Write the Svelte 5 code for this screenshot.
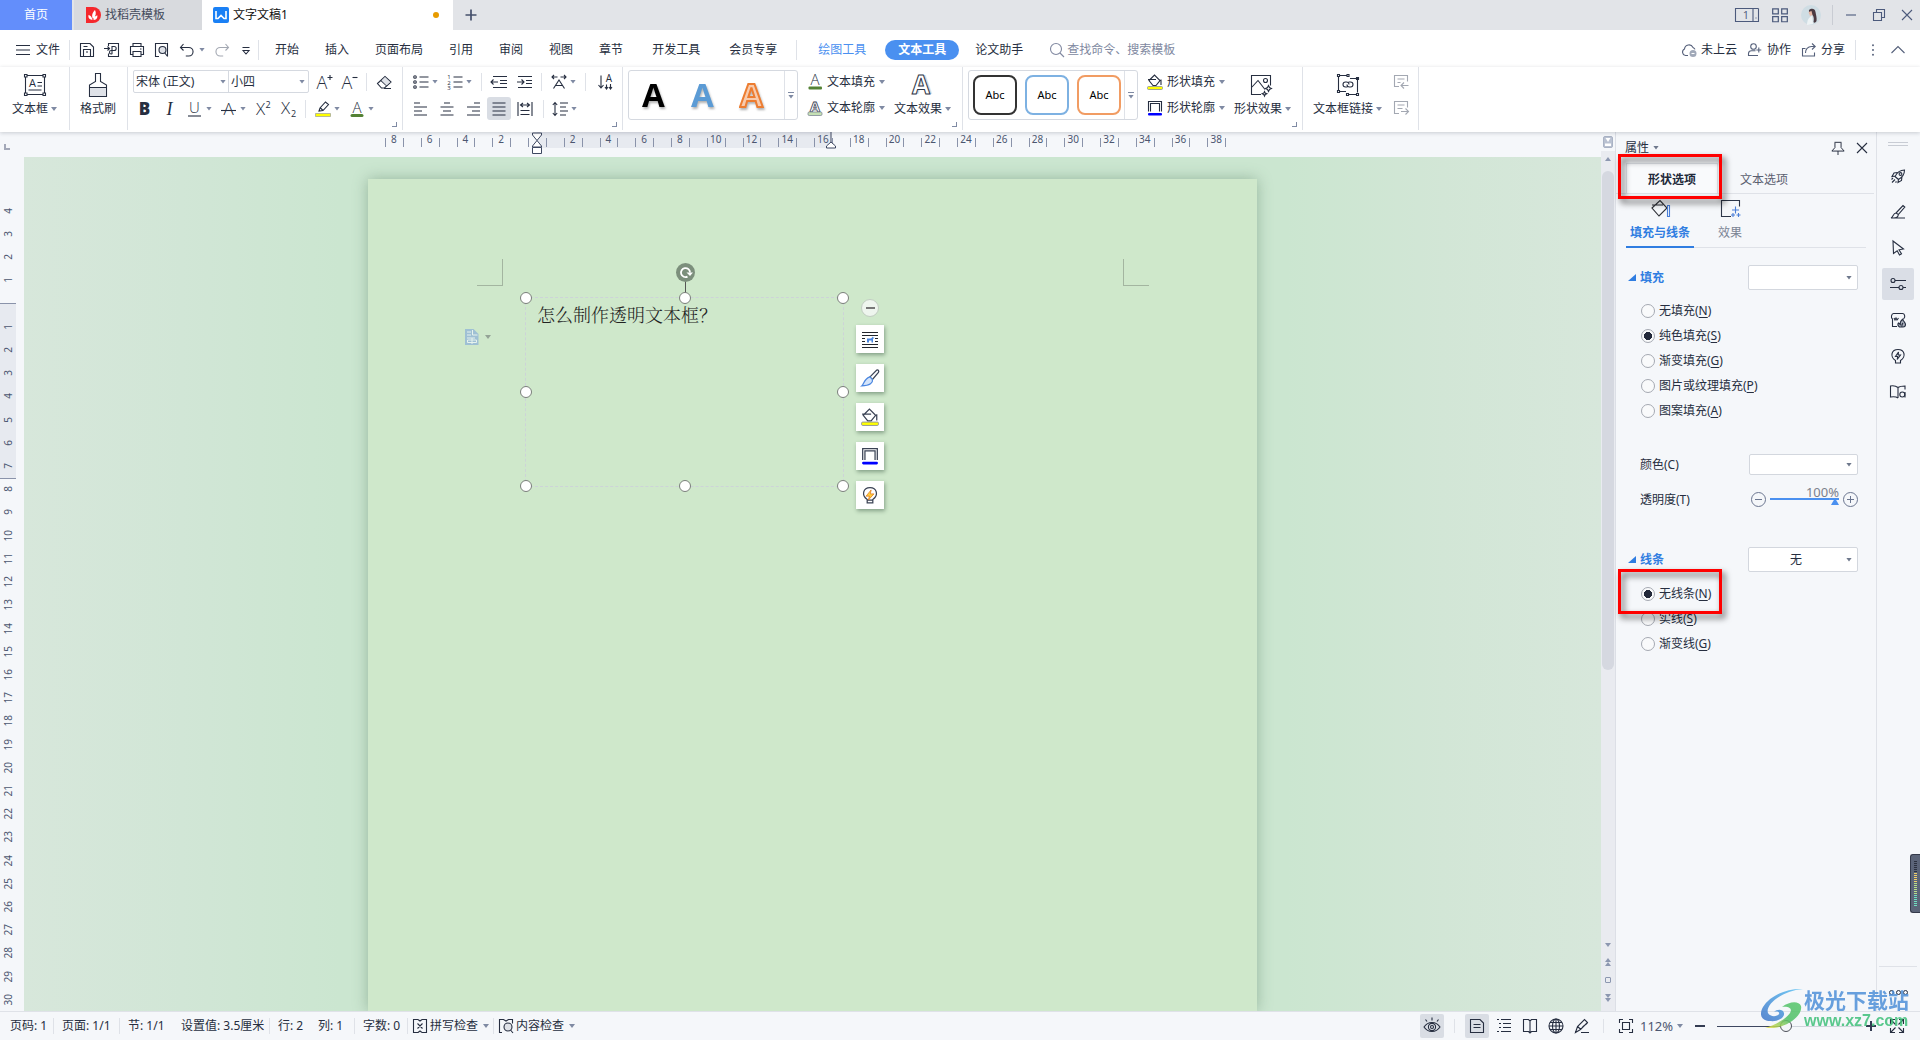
<script>
  const hTicks = Array.from({ length: 48 }, (_, i) => {
    const n = i - 8;
    return n !== 0 && i % 2 === 0 ? Math.abs(n) : '';
  });
  const vTicks = Array.from({ length: 35 }, (_, i) => (i === 4 ? '' : Math.abs(i - 4)));
  const fillKinds = [
    ['无填充', 'N'], ['纯色填充', 'S'], ['渐变填充', 'G'], ['图片或纹理填充', 'P'], ['图案填充', 'A']
  ];
  const lineKinds = [['无线条', 'N'], ['实线', 'S'], ['渐变线', 'G']];
  let fill = $state('S');
  let line = $state('N');
  let zoom = $state(47);
  let opacity = $state(100);
  const handles = ['nw', 'n', 'ne', 'w', 'e', 'sw', 's', 'se'];
  const f = 'stroke="none" fill="currentColor"';
  const letter = (x, y, s, t, extra = '') =>
    `<text x="${x}" y="${y}" font-size="${s}" text-anchor="middle" ${f} font-family="Open Sans, Lato, sans-serif" ${extra}>${t}</text>`;
  const light = 'font-weight="300"';

  const icons = {
    menu: '<path d="M1 3.5h14M1 8h14M1 12.5h14"/>',
    save: '<path d="M1.5 1.5h9.500l3.500 3.500v9.500h-13zM4.500 14.500v-7h7v7M4.500 4.500h4M7 10h2"/>',
    pdf: '<path d="M4.500 4v-2.500h10v13h-10v-3M0 6.500h5M3.500 4.500l2 2-2 2M8 12v-7.500h2.200a2 2 0 0 1 0 4h-3a1.700 1.700 0 0 0 0 3.500h1"/>',
    print: '<path d="M4 4.500v-3h8v3M4 12.500h-2.500v-8h13v8h-2.500M4 9.500h8v5h-8zM11 7h1.500"/>',
    preview: '<path d="M5 14.500h-3.500v-13h12v13M10.800 11l2.800 3.500"/><circle cx="8.500" cy="8" r="3.500" fill="#dfe2e8"/>',
    undo: '<path d="M4.500 2l-3 3.500 3 3M1.800 5.500h8a4.200 4.200 0 0 1 0 8.500h-3"/>',
    redo: '<path d="M11.500 2l3 3.500-3 3M14.200 5.500h-8a4.200 4.200 0 0 0 0 8.500h3"/>',
    more: '<path d="M3.500 5.500h7M4 8.500l3 3.500 3-3.500z"/>',
    search: '<circle cx="7" cy="7" r="5.500"/><path d="M11 11l4 4"/>',
    cloud: '<path d="M7 13.500h-2.500a3.500 3.500 0 0 1-1-6.600a4.500 4.500 0 0 1 8.500-1.500a3.500 3.500 0 0 1 2 2"/><circle cx="12" cy="11.500" r="3.500" fill="#a0a8b8" stroke="none"/><path d="M10.500 11.500h3" stroke="#fff"/>',
    people: '<circle cx="6.500" cy="4.500" r="2.800"/><path d="M11 13.500h-9.500v-2a3 3 0 0 1 3-2.800h4M11.800 5.500v5M9.300 8h5"/>',
    share: '<path d="M4.500 6.500h-3v7.500h12v-3.500M4.500 11a6 6 0 0 1 6-6.500h3.500M11 1.500l3.200 3-3.200 3"/>',
    dots: `<g ${f}><circle cx="8" cy="2.500" r="1.100"/><circle cx="8" cy="8" r="1.100"/><circle cx="8" cy="13.500" r="1.100"/></g>`,
    up: '<path d="M1.500 11l6.500-6.500 6.500 6.500"/>',
    grid: '<path d="M1.500 2.500h5v4.500h-5zM9.500 2.500h5v4.500h-5zM1.500 9.500h5v4.500h-5zM9.500 9.500h5v4.500h-5z"/>',
    count: `<path d="M18 13.500h-17.500v-13h23M18 .5v13M23.500 .5v13h-5.500"/><path d="M20.500 10h1"/>${letter(11, 11, 11, '1')}`,
    min: '<path d="M3 8h10"/>',
    restore: '<path d="M2.500 5.500h8v8h-8zM5.500 5v-2.500h8v8h-2.500"/>',
    close: '<path d="M3 3l10 10M13 3l-10 10"/>',
    plus: '<path d="M8 2.500v11M2.500 8h11" stroke-width="1.700"/>',
    textbox: `<path d="M4 2.500h16M4 21.500h16M2.500 4v16M21.500 4v16M14.500 9.500h4.500M14.500 13h4.500M5.500 17h13"/><path d="M1.500 1.500h2.500v2.500h-2.500zM20 1.500h2.500v2.500h-2.500zM1.500 20h2.500v2.500h-2.500zM20 20h2.500v2.500h-2.500z"/>${letter(9.5, 14, 11, 'A')}`,
    brush: '<path d="M9.500 8.500v-8h5v8l6 3.500v11.500h-17v-11.500zM3.500 14.500h17"/><path d="M4 15h16v8h-16z" fill="#dfe2e8" stroke="none"/>',
    aplus: `${letter(6, 15, 18, 'A', light)}<path d="M11.500 3.500h5M14 1v5"/>`,
    aminus: `${letter(6, 15, 18, 'A', light)}<path d="M11.500 3.500h5"/>`,
    eraser: '<path d="M1.500 9.500l7.500-7 6 5.500-6.500 6h-3zM5 6.500l6 5.500M8 14.500h7"/><path d="M5.500 6.500l3.500-3.500 5 5-3.500 3.500z" fill="#dfe2e8" stroke="none"/>',
    bold: letter(7.500, 14, 17, 'B', 'font-weight="800"'),
    italic: letter(7.500, 14, 18, 'I', 'font-style="italic" style="font-family:Liberation Serif"'),
    under: `${letter(7.500, 12, 15, 'U', light)}<path d="M1 15h13"/>`,
    strike: `${letter(7.500, 14, 17, 'A', light)}<path d="M0 9.500h15"/>`,
    sup: `${letter(5.500, 14, 17, 'X', light)}${letter(13, 7, 9, '2')}`,
    sub: `${letter(5.500, 13, 17, 'X', light)}${letter(13.500, 15.500, 9, '2')}`,
    hilite: '<path d="M4 10l1-3 5.500-6 3 2.500-5.500 6-4 .5zM5.500 7l2.500 2.500"/><path d="M.5 12.500h15v3h-15z" fill="#ff0" stroke="#8a8f9c" stroke-width=".6"/>',
    acolor: `${letter(8, 11.500, 15, 'A', light)}<rect x="1.500" y="13" width="13" height="3" rx="1.500" fill="#548235" stroke="none"/>`,
    afill: `${letter(8, 11, 15, 'A', light)}<rect x="1.500" y="12.500" width="13.500" height="3" rx="1" fill="#548235" stroke="none"/>`,
    aline: '<text x="8" y="12" font-size="15" font-weight="bold" text-anchor="middle" fill="#fff" stroke="#3a4254" stroke-width=".8" font-family="Open Sans">A</text><rect x="1" y="12" width="14" height="3.500" rx="1.200" fill="#c5e0b4" stroke="#7f8896" stroke-width=".8"/>',
    bullets: '<circle cx="2" cy="3" r="1.300"/><circle cx="2" cy="8" r="1.300"/><circle cx="2" cy="13" r="1.300"/><path d="M6.500 3h9M6.500 8h9M6.500 13h9"/>',
    numbers: `<path d="M6.500 3h9M6.500 8h9M6.500 13h9"/>${letter(2, 5, 6, '1')}${letter(2, 10.500, 6, '2')}${letter(2, 16, 6, '3')}`,
    outdent: '<path d="M2 2.500h14M9 6.500h7M9 9.500h7M2 13.500h14M0 8h7M2.500 5.500l-2.500 2.500 2.500 2.500"/>',
    indent: '<path d="M2 2.500h14M10 6.500h6M10 9.500h6M2 13.500h14M1 8h7M5.500 5.500l2.500 2.500-2.500 2.500"/>',
    textdir: '<path d="M1 3h5.500M9.500 3h5.500M3 1l-2 2 2 2M13 1l2 2-2 2M2.500 14.500l5.500-8.500 5.500 8.500M5 11.500h6"/>',
    sort: `<path d="M6 1.500v12M3.500 11l2.500 3 2.500-3M11.500 14.500v-4M15.500 10v4.500M14 13l1.500 2 1.500-2M10 13l1.500 2 1.500-2"/>${letter(14, 8, 10, 'A')}`,
    left: '<path d="M1 2h6M1 6h13M1 10h8M1 14h13"/>',
    center: '<path d="M5 2h6M1.500 6h13M4 10h8M1.500 14h13"/>',
    right: '<path d="M9 2h6M2 6h13M7 10h8M2 14h13"/>',
    justify: '<path d="M1.500 2h13M1.500 6h13M1.500 10h13M1.500 14h13"/>',
    distribute: '<path d="M1 1v14M15 1v14M3.500 4h9M6 2l-2.500 2 2.500 2M10 2l2.500 2-2.500 2M3.500 9.500h9M3.500 13.500h9"/>',
    spacing: '<path d="M3 1.500v13M.8 4l2.200-2.500 2.200 2.500M.8 12l2.200 2.500 2.200-2.500M8 2h8M8 6h6M8 10h8M8 14h6"/>',
    effectA: '<text x="14" y="21" font-size="26" font-weight="bold" text-anchor="middle" fill="#d9dbe0" stroke="none" font-family="Open Sans">A</text><text x="12" y="21" font-size="26" font-weight="bold" text-anchor="middle" fill="#fff" stroke="#2d3648" stroke-width="1" font-family="Open Sans">A</text>',
    bucket: '<path d="M2 6.500l5.500-5.500 5.500 5.500-4 5h-3zM1 5.500h8M14 5.500v5.500"/><rect x=".5" y="12.500" width="15" height="3" rx="1" fill="#ff0" stroke="#8a8f9c" stroke-width=".8"/>',
    frame: '<path d="M1.500 11.500v-10h13v10M3.500 11.500v-8h9v8"/><rect x="1" y="13" width="14" height="2.500" rx="1" fill="#00f" stroke="none"/>',
    picfx: '<path d="M12 21.500h-9.500v-19h19v10M3 14l6-6.500 7 9"/><circle cx="16.500" cy="7.500" r="2"/><path d="M19.500 12.500l1 2 2 1-2 1-1 2-1-2-2-1 2-1zM15.500 18.500l.7 1.600 1.600.7-1.600.7-.7 1.600-.7-1.600-1.600-.7 1.600-.7z"/>',
    link: '<path d="M3 2.500h8M14 5.500h7.500v14M2.500 3.500v14M3 18.500h7M12.500 21.500h8"/><path d="M1.500 1.500h2v2h-2zM11 1.500h2v2h-2zM20.500 4.500h2v2h-2zM1.500 17.500h2v2h-2zM10.500 20.500h2v2h-2zM20.500 20.500h2v2h-2z"/><path d="M11.500 14h-2a2.500 2.500 0 0 1 0-5h1a2.500 2.500 0 0 1 2.500 2.500M12.500 9h2a2.500 2.500 0 0 1 0 5h-1a2.500 2.500 0 0 1-2.500-2.500"/>',
    prevbox: '<path d="M6 12.500h-4.500v-11h13v6M4.500 5h7M4.500 8.500h3M8 11.500h7.500M11 8.500l-3 3 3 3"/>',
    nextbox: '<path d="M6 13.500h-4.500v-12h13v6M4.500 5h7M4.500 8.500h5M8 11.500h7.500M12.500 8.500l3 3-3 3"/>',
    pin: '<path d="M4 1.500h8M4.500 2v5.500l-3.500 4h14l-3.500-4v-5.500M8 11.500v4.500"/>',
    panelfill: '<path d="M2 9l8-7.500 7 7.500-8 8zM2 6h11" stroke="#2d2f36"/><path d="M17.500 6.500h2v11h-2z" stroke="#4a7fd8"/>',
    panelfx: '<path d="M11 17.500h-9.500v-16h18v6" stroke="#2d3648"/><path d="M15.500 7.500v7M12 11h7M13 14v4M11 16h4M18.500 14v4M16.500 16h4" stroke="#4a7fd8"/>',
    rocket: '<path d="M5 8.500c2-4 5.500-6.500 9.500-6.500c0 4-2.500 7.500-6 9.500zM5.500 8l-3.500.5 2-3.500 3.500-.5M8.500 11l-.5 3.500 3.500-2 .5-4M3 10l-1.500 1.500M5 11.500l-3 3M6.500 13.500l-1 1"/><circle cx="10.500" cy="6" r="1.400"/>',
    pen: '<path d="M6 9l7-7.500 1.800 1.500-6.500 7.500zM6 9c-3 0-2.500 4-5 5h14M8.300 10.500c0 2-2 3.500-5 3.500"/>',
    cursor: '<path d="M3 1l10.500 8-4.500.8 2.500 4-2 1.200-2.300-4.200-3.700 2.700z"/>',
    sliders: '<path d="M5 4.500h11M0 11.500h9M13 11.500h3"/><circle cx="3" cy="4.500" r="2"/><circle cx="11" cy="11.500" r="2"/>',
    fire: '<path d="M7 14.500h-4.500v-7.500c-2-1-1-5.500 1-5.500h9c2 0 3 3 1.500 5M4 6l1 2 1-2 1 2 1.500-2"/><path d="M9.500 15c-3-2-1-4-1-4l1.800 1.500c-.3-3 1.200-4.500 2.700-5.500c-.5 2 2.500 3 2.500 5.500c0 1.500-1 2.500-2.500 2.500zM12 14.500c-.5-1.500 0-2.500 1-3.500" fill="#aab0bc"/>',
    bulb: '<path d="M5.500 12.500c-6-4-4-11 2.500-11s8.500 7 2.500 11v2.500h-5zM8.500 4l-3 4.500h2.200l-.5 3 3.300-4.500h-2.300z"/>',
    bookq: '<path d="M8 14c-2-1.500-4.500-1.500-7.500-1v-11c3-.5 5.500 0 7.500 1.500c2-1.500 4.500-1.500 7-1.500v3.500M8 3.500v10.500"/><circle cx="12.300" cy="10.500" r="2.500"/><path d="M15 8v5.500"/>',
    spell: '<path d="M6 1.500h-4.500v13h4.500M10 1.500h4.500v13h-4.500M6 1.500l2 1.500 2-1.500M6 14.500l2-1.500 2 1.500M5.500 5.500l5 5M10.500 5.500l-5 5"/>',
    check: '<path d="M4 14.500h-2.500v-13h4l2.500 1.500 2.500-1.500h4v4M12.500 12l2.500 3"/><circle cx="10" cy="9" r="4" fill="#dfe2e8"/>',
    eye: '<path d="M1 10c4-6 12-6 16 0c-4 6-12 6-16 0zM9 .5v3M2.500 2.500l1.500 2M15.500 2.500l-1.500 2"/><circle cx="9" cy="10" r="3.600"/><circle cx="9" cy="10" r="1.500"/>',
    doc: '<path d="M1.500 1.500h9.500l3.500 3.500v9.500h-13zM4.500 6.500h7M4.500 9.500h7"/>',
    outline: '<path d="M1 1.500h2M5 1.500h10M3 5.500h2M7 5.500h8M3 9.500h2M7 9.500h8M1 13.500h2M5 13.500h10"/>',
    book: '<path d="M1.500 1.500h5l1.500 1.500 1.500-1.500h5v12h-5l-1.500 1.500-1.500-1.500h-5zM8 3v12"/>',
    globe: '<circle cx="8" cy="8" r="7"/><ellipse cx="8" cy="8" rx="3.500" ry="7"/><path d="M1 8h14M2 4.500h12M2 11.500h12M8 1v14"/>',
    quill: '<path d="M1.500 14.500l2-6 7-7 3 3-7 7zM3.500 8.500l3.500 3M8.500 9l5-4M7 14.500h8"/>',
    fit: '<path d="M5 1.500h-3.500v3.500M11 1.500h3.500v3.500M5 14.500h-3.500v-3.500M11 14.500h3.500v-3.500M4.500 4.500h7v7h-7z"/>',
    full: '<path d="M6 1.500h-4.500v4.500M10 1.500h4.500v4.500M6 14.500h-4.500v-4.500M10 14.500h4.500v-4.500M2 2l4.500 4.500M14 2l-4.500 4.500M2 14l4.500-4.500M14 14l-4.500-4.500"/>',
    wrap: '<path d="M0 1.500h16M0 4.500h16M0 7.500h3M13 7.500h3M0 10.500h3M13 10.500h3M0 13.500h16M0 16.500h16" stroke="#22252c"/><path d="M5 11.500v-4h4l2-2v1h1.500l-1.500 1.500v3.500h-1.500v-2h-2.500v2z" fill="#4a86e0" stroke="none"/>',
    paint: '<path d="M8 7l6-6c1.500-.5 2.200.8 1.500 2l-5.500 6.500z"/><path d="M8 7l2.200 2.500c.5 2.500-2 5.500-9.500 5.500c2-1.500 2-6.500 7.300-8z" fill="#d4e4fa" stroke="#4a86e0"/>',
    bulbc: '<path d="M5.500 12c-5.500-4-3.500-10.500 2.500-10.500s8 6.500 2.500 10.500v3h-5zM5.500 12.500h5"/><path d="M9 3.500l-4.500 5.500h3l-1 3.500 5-5.500h-3.200z" fill="#ffcf3a" stroke="#e07a20" stroke-width=".7"/>'
  };
</script>

{#snippet icon(name, size = 16, box = 16)}
  <svg class="ic" width={size} height={size} viewBox="0 0 {box} {box}" aria-hidden="true">{@html icons[name]}</svg>
{/snippet}
{#snippet caret()}<i class="caret"></i>{/snippet}
{#snippet tool(name, label, menu = false)}
  <button class="tool" aria-label={label}>{@render icon(name)}{#if menu}{@render caret()}{/if}</button>
{/snippet}
{#snippet big(name, label, menu = true)}
  <button class="big">{@render icon(name, 24, 24)}<span class="lab">{label}{#if menu}{@render caret()}{/if}</span></button>
{/snippet}
{#snippet wide(name, label)}
  <button class="wide">{@render icon(name)}<span>{label}</span>{@render caret()}</button>
{/snippet}

<div class="app">
  <header class="titlebar">
    <button class="tab home">首页</button>
    <button class="tab tpl">
      <svg width="16" height="16" viewBox="0 0 16 16"><path d="M1 0h7a8 8 0 0 1 0 16h-7z" fill="#f5282d"/><path d="M7.500 13c-5-1-4-4-4-5c2 .5 3.500 2 4 5zM8 12c-2-4 0-7 2-9c1.500 3 1 6-2 9zM8.500 13c0-3 2-4.500 4-4.500c0 3-1.500 4.500-4 4.500z" fill="#fff"/></svg>
      找稻壳模板
    </button>
    <button class="tab doc">
      <svg width="16" height="16" viewBox="0 0 16 16"><rect width="16" height="16" rx="2" fill="#1a80f5"/><path d="M3 4v7.500h2l3-3 3 3h2v-7.500" fill="none" stroke="#fff" stroke-width="1.600"/></svg>
      文字文稿1<b class="dot"></b>
    </button>
    <button class="add" aria-label="新建">{@render icon('plus')}</button>
    <div class="win">
      <button aria-label="窗口"><svg class="ic" width="24" height="14" viewBox="0 0 24 14">{@html icons.count}</svg></button>
      <button aria-label="应用">{@render icon('grid', 18)}</button>
      <span class="avatar"><svg width="20" height="20" viewBox="0 0 20 20"><circle cx="10" cy="10" r="10" fill="#cfdde4"/><path d="M8 5c2-2 6-2 6.500 2c.5 3 1.500 6 1 9c-1 2-2.500 2-3 1c.5-3 .5-5-1-7c-2 0-4-2-3.500-5z" fill="#4a3a42"/><path d="M7.500 7l3-1 1 4-2.500 1z" fill="#e8b9a6"/><path d="M6 20c0-5 2-8 5-9l1 8z" fill="#eef3f5"/></svg></span>
      <i class="vsep"></i>
      <button aria-label="最小化">{@render icon('min')}</button>
      <button aria-label="还原">{@render icon('restore')}</button>
      <button aria-label="关闭">{@render icon('close')}</button>
    </div>
  </header>

  <div class="menubar">
    <button class="file">{@render icon('menu')}文件</button>
    <i class="vsep"></i>
    <div class="quick">
      <button aria-label="保存">{@render icon('save')}</button>
      <button aria-label="输出为PDF">{@render icon('pdf')}</button>
      <button aria-label="打印">{@render icon('print')}</button>
      <button aria-label="打印预览">{@render icon('preview')}</button>
      <button aria-label="撤销">{@render icon('undo')}{@render caret()}</button>
      <button class="dim" aria-label="恢复">{@render icon('redo')}</button>
      <button aria-label="更多">{@render icon('more')}</button>
    </div>
    <i class="vsep"></i>
    <nav>
      <button>开始</button><button>插入</button><button>页面布局</button><button>引用</button>
      <button>审阅</button><button>视图</button><button>章节</button>
      <button class="far">开发工具</button><button class="far">会员专享</button>
      <i class="vsep"></i>
      <button class="ctx">绘图工具</button><button class="pill">文本工具</button><button class="help">论文助手</button>
    </nav>
    <button class="find">{@render icon('search')}查找命令、搜索模板</button>
    <div class="cloud">
      <button>{@render icon('cloud')}未上云</button>
      <button>{@render icon('people')}协作</button>
      <button>{@render icon('share')}分享</button>
      <i class="vsep"></i>
      <button aria-label="更多选项">{@render icon('dots', 14)}</button>
      <button aria-label="收起功能区">{@render icon('up')}</button>
    </div>
  </div>

  <div class="ribbon">
    <section class="g box">{@render big('textbox', '文本框')}</section>
    <section class="g fmt">{@render big('brush', '格式刷', false)}</section>
    <section class="g stack font">
      <div class="row">
        <div class="combo">
          <span class="sel fam"><select aria-label="字体"><option>宋体 (正文)</option></select>{@render caret()}</span>
          <span class="sel siz"><select aria-label="字号"><option>小四</option></select>{@render caret()}</span>
        </div>
        {@render tool('aplus', '增大字号')}{@render tool('aminus', '减小字号')}
        <i class="sep"></i>{@render tool('eraser', '清除格式')}
      </div>
      <div class="row second">
        {@render tool('bold', '加粗')}{@render tool('italic', '倾斜')}{@render tool('under', '下划线', true)}
        {@render tool('strike', '删除线', true)}{@render tool('sup', '上标')}{@render tool('sub', '下标')}
        <i class="sep"></i>{@render tool('hilite', '突出显示', true)}{@render tool('acolor', '字体颜色', true)}
      </div>
      <i class="corner"></i>
    </section>
    <section class="g stack para">
      <div class="row">
        {@render tool('bullets', '项目符号', true)}{@render tool('numbers', '编号', true)}<i class="sep"></i>
        {@render tool('outdent', '减少缩进')}{@render tool('indent', '增加缩进')}<i class="sep"></i>
        {@render tool('textdir', '中文版式', true)}<i class="sep"></i>{@render tool('sort', '排序')}
      </div>
      <div class="row align">
        {#each [['left', '左对齐'], ['center', '居中'], ['right', '右对齐'], ['justify', '两端对齐'], ['distribute', '分散对齐']] as [n, l]}
          <button class="al" class:on={n === 'justify'} aria-label={l}>{@render icon(n)}</button>
        {/each}
        <i class="sep"></i>{@render tool('spacing', '行距', true)}
      </div>
      <i class="corner"></i>
    </section>
    <section class="g art">
      <div class="gallery">
        <button class="wa k">A</button><button class="wa b">A</button><button class="wa o">A</button>
        <button class="drop" aria-label="更多样式"><i class="bar"></i>{@render caret()}</button>
      </div>
      <div class="pair">{@render wide('afill', '文本填充')}{@render wide('aline', '文本轮廓')}</div>
      {@render big('effectA', '文本效果')}
      <i class="corner"></i>
    </section>
    <section class="g shape">
      <div class="gallery">
        <button class="ab k">Abc</button><button class="ab b">Abc</button><button class="ab o">Abc</button>
        <button class="drop" aria-label="更多形状样式"><i class="bar"></i>{@render caret()}</button>
      </div>
      <div class="pair">{@render wide('bucket', '形状填充')}{@render wide('frame', '形状轮廓')}</div>
      {@render big('picfx', '形状效果')}
      <i class="corner"></i>
    </section>
    <section class="g chain">
      {@render big('link', '文本框链接')}
      <div class="pair dim">
        <button aria-label="前一文本框">{@render icon('prevbox')}</button>
        <button aria-label="后一文本框">{@render icon('nextbox')}</button>
      </div>
    </section>
  </div>

  <main class="work">
    <div class="editor">
      <div class="hruler">
        <i class="tabmark"></i>
        <div class="ticks">
          <i class="band"></i>
          {#each hTicks as t}<span>{t}</span>{/each}
          <svg class="mark start" width="12" height="24" viewBox="0 0 12 24"><path d="M1.500 1h9v2l-4.500 5.500-4.500-5.500zM6 8.500l4.500 5.500v1h-9v-1zM1.500 15.500h9v6h-9z"/></svg>
          <svg class="mark end" width="12" height="24" viewBox="0 0 12 24"><path d="M6 0v10M6 10l4.500 4v2h-9v-2z"/></svg>
        </div>
      </div>
      <div class="vruler">
        <i class="vband"></i>
        {#each vTicks as t}<span>{t}</span>{/each}
      </div>
      <div class="canvas">
        <article class="page">
          <i class="crop l"></i><i class="crop r"></i>
          <button class="smart" aria-label="粘贴选项">
            <svg width="14" height="16" viewBox="0 0 14 16"><path d="M0 0h8.500l5 5v11h-13.500z" fill="#9fc0d4"/><path d="M2 3h4M2 6h4M2 9h8M2.500 11h9v2.500h-9zM7 9v6M7.500 1v5h5" fill="none" stroke="#e7f3ee"/></svg>
            {@render caret()}
          </button>
          <div class="textbox">
            <p>怎么制作透明文本框？</p>
            <i class="stem"></i>
            <svg class="rotate" width="19" height="19" viewBox="0 0 19 19"><circle cx="9.500" cy="9.500" r="9.500" fill="#7c8f7c"/><path d="M11.500 13.600a4.500 4.500 0 1 1 2.500-4" fill="none" stroke="#fff" stroke-width="1.800"/><path d="M10.500 9.500h6.500l-3 3.500z" fill="#fff"/></svg>
            {#each handles as h}<i class="h {h}"></i>{/each}
          </div>
          <div class="floating">
            <button class="fold" aria-label="收起"></button>
            <button class="ft" aria-label="布局选项">{@render icon('wrap', 17, 17)}</button>
            <button class="ft" aria-label="格式刷">{@render icon('paint', 18)}</button>
            <button class="ft" aria-label="填充">{@render icon('bucket', 18)}</button>
            <button class="ft" aria-label="轮廓">{@render icon('frame', 18)}</button>
            <button class="ft" aria-label="提示">{@render icon('bulbc', 18)}</button>
          </div>
        </article>
      </div>
    </div>

    <div class="scroll">
      <svg width="10" height="14" viewBox="0 0 10 14"><rect x=".5" y="1.500" width="9" height="11" rx="1.500" fill="#b9c1d1" stroke="#a9b2c4"/><path d="M2.500 3h5l-2.500 4zM2 8.500h6v2.500h-6z" fill="#fff"/></svg>
      <div class="rail"><i class="tri u"></i><i class="thumb"></i></div>
      <div class="jump"><i class="tri d"></i><span class="dbl"><i class="tri u"></i><i class="tri u"></i></span><i class="sq"></i><span class="dbl"><i class="tri d"></i><i class="tri d"></i></span></div>
    </div>

    <aside class="panel">
      <div class="phead">属性{@render caret()}<span class="push"></span>
        <button aria-label="固定">{@render icon('pin', 14)}</button><button aria-label="关闭面板">{@render icon('close')}</button>
      </div>
      <div class="ptabs"><button class="on">形状选项</button><button>文本选项</button></div>
      <div class="subtabs">
        <button class="on">{@render icon('panelfill', 20, 20)}填充与线条</button>
        <button class="fx">{@render icon('panelfx', 20, 20)}效果</button>
      </div>
      <div class="sect"><h3><i></i>填充</h3><span class="sel"><select aria-label="填充样式"><option></option></select>{@render caret()}</span></div>
      <div class="radios">
        {#each fillKinds as [t, k]}
          <label><input type="radio" name="fill" value={k} bind:group={fill} /><span>{t}(<u>{k}</u>)</span></label>
        {/each}
      </div>
      <div class="field color"><label for="color">颜色(C)</label><span class="sel"><select id="color"><option></option></select>{@render caret()}</span></div>
      <div class="field alpha">
        <label for="alpha">透明度(T)</label>
        <div class="slide">
          <button class="rnd" aria-label="减少"></button>
          <div class="track"><output>{opacity}%</output><input id="alpha" type="range" bind:value={opacity} /></div>
          <button class="rnd p" aria-label="增加"></button>
        </div>
      </div>
      <div class="sect lines"><h3><i></i>线条</h3><span class="sel mid"><select aria-label="线条样式"><option>无</option></select>{@render caret()}</span></div>
      <div class="radios low">
        {#each lineKinds as [t, k]}
          <label><input type="radio" name="line" value={k} bind:group={line} /><span>{t}(<u>{k}</u>)</span></label>
        {/each}
      </div>
      <i class="callout first"></i><i class="callout next"></i>
    </aside>

    <aside class="side">
      <i class="grip"></i>
      {#each ['rocket', 'pen', 'cursor', 'sliders', 'fire', 'bulb', 'bookq'] as n}
        <button class:on={n === 'sliders'} aria-label={n}>{@render icon(n)}</button>
      {/each}
      <div class="rest"><i></i><i></i><i></i></div>
      <div class="meter">{#each Array(23) as _, i}<i class={i < 6 ? 'off' : i < 11 ? 'am' : i < 17 ? 'gr' : 'te'}></i>{/each}</div>
    </aside>
  </main>

  <footer class="status">
    <div class="info">
      <span class="s1">页码: 1</span><span class="s2">页面: 1/1</span><span class="s3">节: 1/1</span><span class="s4">设置值: 3.5厘米</span>
      <span class="s5">行: 2</span><span class="s6">列: 1</span><span class="s7">字数: 0</span>
      <button class="s8">{@render icon('spell')}拼写检查{@render caret()}</button>
      <button class="s9">{@render icon('check')}内容检查{@render caret()}</button>
    </div>
    <div class="view">
      <button class="on eye" aria-label="护眼模式">{@render icon('eye', 18, 18)}</button><i class="vsep"></i>
      <button class="on pg" aria-label="页面视图">{@render icon('doc')}</button>
      <button aria-label="大纲">{@render icon('outline')}</button>
      <button aria-label="阅读版式">{@render icon('book')}</button>
      <button aria-label="Web版式">{@render icon('globe')}</button>
      <button aria-label="写作模式">{@render icon('quill')}</button><i class="vsep gap"></i>
      <button aria-label="适合页面">{@render icon('fit')}</button>
      <button class="pct">112%{@render caret()}</button>
      <button class="zm" aria-label="缩小"></button>
      <input class="zoom" type="range" aria-label="缩放" bind:value={zoom} />
      <button class="zm p" aria-label="放大"></button>
      <button class="fs" aria-label="全屏">{@render icon('full')}</button>
    </div>
  </footer>

  <div class="brand">
    <svg width="44" height="42" viewBox="0 0 44 42">
      <defs>
        <linearGradient id="ga" x1="0" y1="1" x2="1" y2="0"><stop offset="0" stop-color="#3f74c8"/><stop offset="1" stop-color="#5cc4f5"/></linearGradient>
        <linearGradient id="gb" x1="0" y1="1" x2="1" y2="0"><stop offset="0" stop-color="#f2e24a"/><stop offset=".5" stop-color="#4fbf68"/><stop offset="1" stop-color="#57c76a"/></linearGradient>
      </defs>
      <path d="M43 1c-15-1-33 6-40 18c-5 9 0 14 7 14c7 1 15-3 14-8c-1-4-7-4-10-1c3-1 6 0 5 2c-2 3-9 3-11-1c-3-8 13-22 35-24z" fill="url(#ga)"/>
      <path d="M22 19c8-6 17-6 19-1c2 9-12 20-27 22l-9 0c10-3 21-9 25-15c3-5-2-7-8-6z" fill="url(#gb)"/>
    </svg>
    <div><strong>极光下载站</strong><span>www.xz7.com</span></div>
  </div>
</div>

<style>
  :global(body) { background: #f5f7fa; }
  .app {
    --ink: #262e40; --line: #dfe2e8;
    position: relative; display: grid; grid-template-rows: 30px 37px 65px minmax(0, 1fr) 29px;
    height: 100vh; overflow: hidden; color: var(--ink);
    font: 12px/16px "Noto Sans", "Noto Sans CJK SC", sans-serif;
  }
  button { display: inline-flex; align-items: center; padding: 0; border: 0; background: none; color: inherit; font: inherit; white-space: nowrap; }
  select { appearance: none; border: 0; background: none; color: inherit; font: inherit; width: 100%; height: 100%; }
  input { margin: 0; }
  .ic { flex: none; fill: none; stroke: currentColor; stroke-width: 1.1; overflow: visible; }
  .caret { flex: none; display: inline-block; width: 6px; height: 4px; background: #7f8aa3; clip-path: polygon(0 0, 100% 0, 50% 100%); }
  .vsep { width: 1px; height: 20px; background: var(--line); flex: none; }

  .titlebar { display: flex; background: #e2e4e8; }
  .tab { height: 30px; gap: 4px; }
  .home { width: 72px; justify-content: center; background: #638efb; color: #fff; }
  .tpl { width: 128px; margin-left: 2px; padding-left: 11px; background: #d8dade; color: #444b5c; box-sizing: border-box; }
  .doc { width: 251px; padding: 0 14px 0 11px; background: #fff; box-sizing: border-box; color: #111; }
  .dot { width: 6px; height: 6px; margin-left: auto; border-radius: 50%; background: #e79b00; }
  .add { margin-left: 10px; color: #45506b; }
  .win { display: flex; align-items: center; margin-left: auto; padding-right: 5px; gap: 12px; color: #4c5a7c; }
  .win .vsep { background: #c9ccd3; margin: 0 -2px; }
  .avatar { display: flex; margin: 0 1px 0 0; }

  .menubar { display: flex; align-items: center; background: #fff; padding: 2px 0 0 15px; }
  .file { gap: 5px; margin-right: 9px; }
  .quick { display: flex; align-items: center; gap: 9px; padding: 0 3px 0 9px; }
  .quick .caret { margin-left: 4px; }
  .dim { color: #a3a8b2; }
  nav { display: flex; align-items: center; gap: 26px; padding-left: 16px; }
  .far { margin-left: 3px; }
  nav .vsep { margin: 0 -5px 0 -7px; }
  .ctx { color: #4a90f0; }
  .pill { margin: 0 -10px 0 -7px; padding: 0 13px; height: 20px; border-radius: 10px; background: #4a90f0; color: #fff; font-weight: bold; }
  .find { margin-left: 26px; gap: 2px; color: #8088a0; }
  .cloud { display: flex; align-items: center; gap: 10px; margin-left: auto; padding-right: 14px; }
  .cloud button { gap: 4px; }
  .cloud .ic { color: #55607a; }

  .ribbon { display: flex; background: #fff; box-shadow: 0 1px 4px rgba(40, 50, 70, .22); position: relative; z-index: 2; }
  .g { position: relative; display: flex; box-sizing: border-box; height: 63px; border-right: 1px solid var(--line); }
  .big { flex-direction: column; padding-top: 6px; gap: 4px; height: 51px; }
  .lab { display: flex; align-items: center; gap: 3px; }
  .box { width: 70px; padding-left: 12px; }
  .fmt { width: 58px; padding-left: 10px; }
  .stack { flex-direction: column; gap: 4px; padding-top: 3px; }
  .row { display: flex; align-items: center; gap: 9px; height: 23px; }
  .tool { gap: 3px; }
  .sep { width: 1px; height: 18px; background: var(--line); }
  .font { width: 275px; padding-left: 5px; }
  .second { padding-left: 4px; }
  .combo { display: flex; width: 174px; height: 21px; border: 1px solid #d5d9e0; border-radius: 2px; margin-right: -2px; }
  .sel { position: relative; display: block; box-sizing: border-box; }
  .sel .caret { position: absolute; right: 5px; top: calc(50% - 2px); pointer-events: none; }
  .sel select { padding: 0 2px; display: block; }
  .fam { width: 95px; border-right: 1px solid #d5d9e0; }
  .fam .caret { right: 2px; }
  .siz { flex: 1; }
  .siz .caret { right: 3px; }
  .para { width: 220px; padding-left: 10px; }
  .align { gap: 2px; margin-left: -4px; }
  .align .sep { margin: 0 6px 0 4px; }
  .al { width: 24px; height: 23px; justify-content: center; border-radius: 3px; }
  .al.on { background: #d9dde4; }
  .corner { position: absolute; right: 5px; bottom: 3px; width: 4px; height: 4px; border: solid #7f8aa3; border-width: 0 1px 1px 0; }
  .gallery { display: flex; align-items: center; box-sizing: border-box; width: 170px; height: 50px; margin-top: 3px; border: 1px solid #d5d9e0; border-radius: 3px; }
  .drop { width: 13px; height: 100%; margin-left: auto; flex-direction: column; justify-content: center; gap: 2px; border-left: 1px solid var(--line); }
  .bar { width: 6px; height: 1px; background: #7f8aa3; }
  .art { width: 340px; padding-left: 5px; }
  .wa { width: 49px; justify-content: center; font: bold 33px/40px "Open Sans", sans-serif; filter: drop-shadow(1px 2px 1px rgba(0, 0, 0, .3)); }
  .wa.k { color: #000; }
  .wa.b { color: #5b9bd5; }
  .wa.o { color: #f8cbad; -webkit-text-stroke: 2px #ed7d31; }
  .pair { display: flex; flex-direction: column; gap: 10px; padding-top: 7px; }
  .pair button { height: 16px; }
  .wide { gap: 4px; }
  .art .pair, .shape .pair { margin-left: 9px; }
  .art .big, .shape .big { margin-left: 9px; }
  .art .big .ic, .shape .big .ic { margin-right: 4px; }
  .shape { width: 340px; padding-left: 5px; }
  .ab { width: 44px; height: 40px; margin-left: 4px; justify-content: center; box-sizing: border-box; border: 2px solid #333; border-radius: 8px; background: #fff; font-size: 11px; color: #000; }
  .ab + .ab { margin-left: 8px; }
  .ab.b { border-color: #7db1e2; }
  .ab.o { border-color: #f19c63; }
  .chain { width: 116px; padding-left: 10px; }
  .chain .pair { margin-left: 11px; }

  .work { display: grid; grid-template-columns: minmax(0, 1fr) 15px 260px 44px; min-height: 0; }
  .editor { display: grid; grid-template: 25px minmax(0, 1fr) / 24px minmax(0, 1fr); min-width: 0; min-height: 0; }
  .hruler { grid-column: 1 / 3; position: relative; display: flex; justify-content: center; padding-left: 27px; background: #f5f7fa; }
  .tabmark { position: absolute; left: 4px; top: 12px; width: 4px; height: 4px; border: solid #a3a8b8; border-width: 0 0 2px 2px; }
  .ticks { position: relative; display: flex; width: 858px; height: 16px; color: #4c5670; }
  .ticks span { position: relative; flex: 1; font-size: 10px; line-height: 14px; text-align: center; white-space: nowrap; background: linear-gradient(#8a93aa, #8a93aa) left 6px / 1px 9px no-repeat; }
  .band { position: absolute; left: 152px; width: 294px; top: 0; height: 16px; background: #e7eaf0; }
  .mark { position: absolute; top: 0; fill: #fff; stroke: #3d4760; }
  .start { left: 146px; }
  .end { left: 440px; }
  .vruler { position: relative; display: flex; flex-direction: column; padding-top: 42px; background: #f5f7fa; color: #4c5670; }
  .vruler span { position: relative; flex: 1; width: 16px; display: grid; place-items: center; font-size: 10px; line-height: 12px; writing-mode: sideways-lr; }
  .vband { position: absolute; top: 146px; left: 0; width: 16px; height: 174px; background: #e7eaf0; border: solid #8a93aa; border-width: 1px 0; }
  .canvas { overflow: hidden; display: flex; justify-content: center; padding-top: 22px; background: linear-gradient(90deg, #d7e7db, #d1e6d6 10%, #cbe6d0 20%, #cbe6d0 80%, #d2e6d6 90%, #d7e7db); }
  .page { position: relative; flex: none; width: 889px; background: #cfe8cb; box-shadow: 0 0 14px rgba(70, 110, 80, .4); }
  .crop { position: absolute; top: 80px; width: 25px; height: 26px; border: solid #a3b5a0; border-width: 0 1px 1px 0; }
  .crop.l { left: 109px; }
  .crop.r { right: 108px; border-width: 0 0 1px 1px; }
  .smart { position: absolute; left: 97px; top: 150px; gap: 6px; }
  .smart .caret { background: #94a396; }
  .textbox { position: absolute; left: 157px; top: 118px; width: 319px; height: 190px; border: 1px dashed #cdd3d8; box-sizing: border-box; }
  .textbox p { margin: 7px 0 0 11px; font: 18px/22px "Liberation Serif", "Noto Serif CJK SC", "Noto Sans CJK SC", serif; font-weight: 300; color: #222; white-space: nowrap; }
  .h { position: absolute; width: 12px; height: 12px; box-sizing: border-box; border: 1px solid #7a7f7a; border-radius: 50%; background: #fff; transform: translate(-50%, -50%); }
  .nw { left: 0; top: 0; } .n { left: 50%; top: 0; } .ne { left: 100%; top: 0; }
  .w { left: 0; top: 50%; } .e { left: 100%; top: 50%; }
  .sw { left: 0; top: 100%; } .s { left: 50%; top: 100%; } .se { left: 100%; top: 100%; }
  .stem { position: absolute; left: 50%; top: -18px; width: 1px; height: 14px; background: #555; }
  .rotate { position: absolute; left: calc(50% - 9px); top: -35px; }
  .floating { position: absolute; left: 488px; top: 120px; display: flex; flex-direction: column; align-items: center; gap: 11px; color: #3a4254; }
  .fold { width: 18px; height: 18px; margin-bottom: -3px; border: 1px solid #c2cdc2; border-radius: 50%; box-sizing: border-box; background: linear-gradient(#777, #777) center / 9px 2px no-repeat #eef5ee; }
  .ft { width: 28px; height: 28px; justify-content: center; background: #fff; box-shadow: 1px 2px 4px rgba(40, 70, 50, .45); }

  .scroll { display: flex; flex-direction: column; align-items: center; box-sizing: border-box; background: #e9ebf0; border-right: 1px solid #dcdfe6; }
  .scroll > svg { padding: 3px 2px 2px; background: #f5f7fa; }
  .rail { flex: 1; display: flex; flex-direction: column; align-items: center; padding-top: 6px; }
  .thumb { width: 12px; height: 499px; margin-top: 10px; border-radius: 6px; background: #d5d8e0; }
  .tri { flex: none; width: 6px; height: 4px; background: #8c97b0; clip-path: polygon(0 0, 100% 0, 50% 100%); }
  .tri.u { clip-path: polygon(50% 0, 100% 100%, 0 100%); }
  .jump { display: flex; flex-direction: column; align-items: center; gap: 11px; padding-bottom: 9px; }
  .dbl { display: grid; gap: 0; }
  .sq { width: 4px; height: 4px; border: 1px solid #8c97b0; border-radius: 1px; }

  .panel { position: relative; background: #f5f7fa; }
  .phead { display: flex; align-items: center; height: 31px; padding: 0 6px 0 9px; gap: 4px; }
  .push { flex: 1; }
  .phead button { margin-left: 5px; }
  .ptabs { display: flex; height: 30px; border-bottom: 1px solid var(--line); margin-right: 2px; padding-left: 10px; }
  .ptabs button { width: 92px; justify-content: center; padding-top: 3px; box-sizing: border-box; color: #5b6070; }
  .ptabs .on { font-weight: bold; color: #22293a; background: #f9fafc; border: 1px solid var(--line); border-bottom: 0; }
  .subtabs { display: flex; height: 53px; margin: 0 10px; border-bottom: 1px solid var(--line); color: #7b8494; }
  .subtabs button { flex-direction: column; width: 68px; box-sizing: border-box; gap: 6px; padding-top: 5px; height: 54px; border-bottom: 2px solid transparent; justify-content: flex-start; }
  .subtabs .on { color: #2f7de1; font-weight: bold; border-color: #2f7de1; }
  .subtabs .fx { width: 72px; }
  .sect { display: flex; align-items: center; justify-content: space-between; margin: 17px 18px 0 12px; height: 25px; }
  h3 { display: flex; align-items: center; gap: 4px; margin: 0; font-size: 12px; color: #2f7de1; }
  h3 i { width: 8px; height: 7px; background: #2f7de1; clip-path: polygon(100% 0, 100% 100%, 0 100%); }
  .panel .sel { width: 110px; height: 25px; border: 1px solid #d3d7de; border-radius: 2px; background: #fff; }
  .panel .color .sel { width: 109px; height: 21px; }
  .panel .caret { background: #6e788c; }
  .mid select { padding-right: 16px; text-align: center; text-align-last: center; }
  .radios { display: flex; flex-direction: column; margin: 8px 0 0 25px; }
  .radios label { display: flex; align-items: center; gap: 4px; height: 25px; }
  .low { margin-top: 9px; }
  input[type="radio"] { appearance: none; flex: none; width: 14px; height: 14px; border: 1px solid #a5a9b2; border-radius: 50%; background: #f9fafb; }
  input[type="radio"]:checked { background: radial-gradient(circle, #22293a 4px, #f9fafb 4px); }
  u { text-underline-offset: 2px; }
  .field { display: flex; align-items: center; justify-content: space-between; margin: 31px 18px 0 24px; }
  .alpha { margin-top: 13px; height: 23px; }
  .slide { display: flex; align-items: center; gap: 4px; }
  .rnd { width: 15px; height: 15px; box-sizing: border-box; border: 1px solid #6b7690; border-radius: 50%; background: linear-gradient(#6b7690, #6b7690) center / 7px 1px no-repeat; }
  .rnd.p { background: linear-gradient(#6b7690, #6b7690) center / 7px 1px no-repeat, linear-gradient(#6b7690, #6b7690) center / 1px 7px no-repeat; }
  .track { position: relative; width: 69px; height: 15px; display: flex; align-items: center; }
  output { position: absolute; right: 0; top: -8px; color: #7b808c; font-size: 13px; line-height: 16px; }
  #alpha { appearance: none; width: 100%; height: 12px; background: linear-gradient(#4a90f0, #4a90f0) left 4px / 69px 2px no-repeat; }
  #alpha::-webkit-slider-thumb { appearance: none; width: 8px; height: 7px; margin-top: 4px; background: #4a90f0; clip-path: polygon(50% 0, 100% 100%, 0 100%); }
  .lines { margin-top: 36px; }
  .callout { position: absolute; left: 2px; width: 98px; height: 39px; border: 3px solid #f00; filter: drop-shadow(3px 4px 3px rgba(0, 0, 0, .65)); pointer-events: none; }
  .first { top: 22px; }
  .next { top: 437px; }

  .side { position: relative; display: flex; flex-direction: column; align-items: center; gap: 4px; padding-right: 1px; background: #f5f7fa; border-left: 1px solid var(--line); box-sizing: border-box; }
  .grip { width: 20px; height: 2px; margin: 10px 0; border: solid #c8ccd4; border-width: 1px 0; }
  .side button { width: 32px; height: 32px; justify-content: center; border-radius: 2px; }
  .side .on { background: #dadee6; }
  .rest { display: flex; justify-content: center; gap: 2px; width: 38px; margin-top: auto; padding: 23px 0 16px; border-top: 1px solid var(--line); }
  .rest i { width: 3px; height: 3px; border: 1px solid var(--ink); border-radius: 50%; }
  .meter { position: absolute; right: 0; top: 722px; width: 10px; height: 59px; box-sizing: border-box; padding: 6px 3px 0 3px; display: flex; flex-direction: column; gap: 1px; border-radius: 3px 0 0 3px; border: solid #343a4a; border-width: 1px 0 1px 1px; background: #5b6478; }
  .meter i { flex: none; height: 1px; }
  .off { background: #2b303e; } .am { background: #f0cf6a; } .gr { background: #b9e08a; } .te { background: #6fe0c0; }

  .status { display: flex; align-items: center; justify-content: space-between; border-top: 1px solid var(--line); background: #f5f7fa; box-sizing: border-box; }
  .info { display: flex; align-items: center; padding-left: 9px; }
  .info > * { box-sizing: border-box; white-space: nowrap; border-left: 1px solid transparent; }
  .s1 { width: 44px; } .s2, .s3, .s5, .s7 { padding-left: 8px; }
  .s2 { width: 66px; } .s3 { width: 61px; } .s4 { width: 89px; } .s5 { width: 48px; } .s6 { width: 37px; } .s7 { width: 53px; }
  .info > .s2, .info > .s3, .info > .s5, .info > .s7, .info > .s8, .info > .s9 { border-color: var(--line); }
  .info > .s8, .info > .s9 { padding-left: 4px; gap: 2px; width: 86px; }
  .info .caret { margin-left: 3px; }
  .view { display: flex; align-items: center; gap: 10px; padding-right: 15px; }
  .view .on { width: 24px; height: 24px; justify-content: center; background: #d9dde4; border-radius: 2px; }
  .view .pg { margin-right: -3px; }
  .view .vsep { height: 14px; }
  .view .gap { margin: 0 4px 0 3px; }
  .pct { width: 43px; justify-content: space-between; font-size: 13px; color: #4c5670; margin-left: -4px; }
  .zm { width: 10px; height: 10px; margin-left: 2px; background: linear-gradient(#333c52, #333c52) center / 10px 2px no-repeat; }
  .zm.p { margin-left: -7px; background: linear-gradient(#333c52, #333c52) center / 10px 2px no-repeat, linear-gradient(#333c52, #333c52) center / 2px 10px no-repeat; }
  .fs { margin-left: 3px; }
  .zoom { appearance: none; width: 146px; height: 12px; margin-left: 2px; background: linear-gradient(90deg, #3d4760 47%, #d0d4dc 47%) center / 100% 1px no-repeat; }
  .zoom::-webkit-slider-thumb { appearance: none; width: 12px; height: 12px; border: 1px solid #4c5058; border-radius: 50%; background: #f5f7fa; }

  .brand { position: absolute; right: 11px; bottom: 9px; z-index: 4; display: flex; align-items: center; opacity: .85; pointer-events: none; }
  .brand div { display: flex; flex-direction: column; }
  .brand strong { font: bold 21px/24px "Noto Sans CJK SC", sans-serif; color: #4f90d8; }
  .brand span { font: bold 16px/20px "Liberation Sans", sans-serif; color: #3fc07a; }
</style>
